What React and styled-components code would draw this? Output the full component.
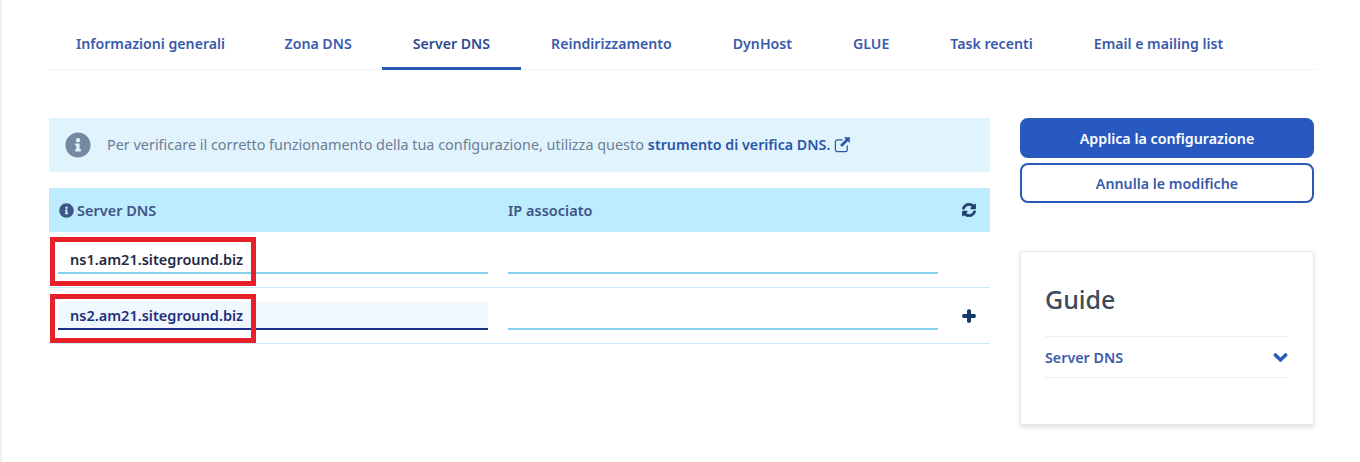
import React from 'react';
import styled, { createGlobalStyle } from 'styled-components';
import { FaInfoCircle, FaSyncAlt, FaPlus, FaChevronDown } from 'react-icons/fa';

/* STYLES */

const GlobalStyle = createGlobalStyle`
  html, body {
    margin: 0;
    padding: 0;
    background: #fff;
  }
  body {
    font-family: "Noto Sans", "Open Sans", sans-serif;
    font-size: 14px;
  }
`;

const Page = styled.div`
  width: 1360px;
  height: 462px;
  box-sizing: border-box;
  border-left: 2px solid #f1f1f1;
  padding: 0 44px 0 47px;
  overflow: hidden;
`;

const Tabs = styled.nav`
  display: flex;
  height: 70px;
  box-sizing: border-box;
  border-bottom: 1px solid #f0f2f4;
`;

const Tab = styled.a`
  display: block;
  box-sizing: border-box;
  height: 70px;
  padding: 34px 30.5px 0;
  line-height: 20px;
  font-size: 14.15px;
  font-weight: 600;
  white-space: nowrap;
  color: ${props => (props.$active ? '#2c4c8f' : '#3a5aab')};
  border-bottom: ${props => (props.$active ? '3px solid #2859b8' : 'none')};

  &:first-child {
    padding-left: 27px;
    padding-right: 29px;
  }
`;

const Content = styled.div`
  display: grid;
  grid-template-columns: 941px 294px;
  column-gap: 30px;
  padding-top: 48px;
`;

const Banner = styled.div`
  display: flex;
  align-items: center;
  height: 54px;
  padding-left: 16px;
  background: #e1f3fd;
  color: #6c7e94;
  font-size: 14.4px;
  white-space: nowrap;

  svg.info {
    width: 26px;
    height: 26px;
    color: #748aa3;
    margin-right: 16px;
    flex: none;
  }
`;

const BannerLink = styled.a`
  color: #2a56a8;
  font-size: 14.25px;
  font-weight: 600;
  margin-left: 4px;
`;

const LinkIcon = styled.svg`
  width: 17px;
  height: 17px;
  margin-left: 4px;
  margin-bottom: 2px;
  vertical-align: middle;
  color: #2a56a8;
`;

const Table = styled.div`
  margin-top: 16px;
`;

const Head = styled.div`
  display: grid;
  grid-template-columns: 459px 1fr 40px;
  align-items: center;
  height: 44px;
  background: #bdecfe;
  color: #3f5585;
  font-size: 14.5px;
  font-weight: 600;
`;

const HeadCell = styled.div`
  display: flex;
  align-items: center;
  gap: 3px;
  padding-left: ${props => props.$pad}px;

  svg {
    width: 15px;
    height: 15px;
  }
`;

const RefreshCell = styled.div`
  display: flex;
  justify-content: center;
  padding-right: 2px;
  color: #21406f;

  svg {
    width: 14px;
    height: 14px;
    stroke: currentColor;
    stroke-width: 25;
  }
`;

const Row = styled.div`
  position: relative;
  display: grid;
  grid-template-columns: 430px 430px 1fr;
  column-gap: 20px;
  height: 56px;
  box-sizing: border-box;
  padding-left: 9px;
  border-bottom: 1px solid #c6eef8;
`;

const Field = styled.div`
  align-self: end;
  box-sizing: border-box;
  height: 28px;
  margin-bottom: 13px;
  padding-left: 12px;
  line-height: 26px;
  font-size: 14.5px;
  font-weight: 600;
  white-space: nowrap;
  color: ${props => (props.$focused ? '#1f2f80' : '#1f2b46')};
  background: ${props => (props.$focused ? '#f0f8fe' : 'transparent')};
  border-bottom: 2px solid ${props => (props.$focused ? '#1c2f85' : '#86d0ee')};
`;

const RowAction = styled.div`
  display: flex;
  justify-content: flex-start;
  align-items: center;
  padding: 0 0 0 4px;
  color: #153a6e;

  svg {
    width: 14px;
    height: 14px;
    stroke: currentColor;
    stroke-width: 50;
  }
`;

// Red annotation drawn over the first column
const Highlight = styled.div`
  position: absolute;
  left: 1px;
  top: ${props => props.$top}px;
  width: 206px;
  height: 49px;
  box-sizing: border-box;
  border: 5px solid #e8202a;
`;

const Side = styled.aside`
  display: flex;
  flex-direction: column;
`;

const Button = styled.button`
  display: block;
  width: 100%;
  height: 40px;
  box-sizing: border-box;
  margin-bottom: 5px;
  border-radius: 8px;
  border: 2px solid #2859b8;
  font-family: inherit;
  font-size: 14.25px;
  font-weight: 600;
  background: ${props => (props.$primary ? '#2859c0' : '#fff')};
  color: ${props => (props.$primary ? '#fff' : '#3a5aab')};
`;

const GuideCard = styled.div`
  margin-top: 43px;
  height: 174px;
  box-sizing: border-box;
  padding: 27px 25px 0 24px;
  border: 1px solid #e6e8ea;
  border-radius: 2px;
  box-shadow: 0 2px 5px rgba(0, 0, 0, 0.14);
`;

const GuideTitle = styled.h2`
  margin: 0;
  height: 57px;
  line-height: 40px;
  font-size: 25px;
  font-weight: 500;
  color: #3c4a5c;
`;

const GuideItem = styled.div`
  display: flex;
  justify-content: space-between;
  align-items: center;
  height: 42px;
  box-sizing: border-box;
  border-top: 1px solid #eceef0;
  border-bottom: 1px solid #eceef0;
  font-size: 14.3px;
  font-weight: 600;
  color: #3a5aab;

  svg {
    width: 15px;
    height: 15px;
    color: #2859b8;
    stroke: currentColor;
    stroke-width: 40;
  }
`;

const tabs = [
    'Informazioni generali',
    'Zona DNS',
    'Server DNS',
    'Reindirizzamento',
    'DynHost',
    'GLUE',
    'Task recenti',
    'Email e mailing list',
];

function App() {
    return (
        <Page>
            <GlobalStyle/>
            <Tabs>
                {tabs.map(name => (
                    <Tab key={name} $active={name === 'Server DNS'}>{name}</Tab>
                ))}
            </Tabs>
            <Content>
                <div>
                    <Banner>
                        <FaInfoCircle className="info"/>
                        <span>
                            Per verificare il corretto funzionamento della tua configurazione, utilizza questo
                            <BannerLink>strumento di verifica DNS.</BannerLink>
                            <LinkIcon viewBox="0 0 18 18" fill="none" stroke="currentColor">
                                <path d="M14 10v4.5a2 2 0 0 1-2 2H3.5a2 2 0 0 1-2-2V6a2 2 0 0 1 2-2H9" strokeWidth="1.3"/>
                                <path d="M11 1.5h5.5V7L14.6 5.2 8.5 11.3 6.7 9.5l6.1-6.1z" fill="currentColor" strokeWidth="0.5"/>
                            </LinkIcon>
                        </span>
                    </Banner>
                    <Table>
                        <Head>
                            <HeadCell $pad={10}><FaInfoCircle/>Server DNS</HeadCell>
                            <HeadCell $pad={0}>IP associato</HeadCell>
                            <RefreshCell><FaSyncAlt/></RefreshCell>
                        </Head>
                        <Row>
                            <Field>ns1.am21.siteground.biz</Field>
                            <Field/>
                            <RowAction/>
                            <Highlight $top={5}/>
                        </Row>
                        <Row>
                            <Field $focused>ns2.am21.siteground.biz</Field>
                            <Field/>
                            <RowAction><FaPlus/></RowAction>
                            <Highlight $top={6}/>
                        </Row>
                    </Table>
                </div>
                <Side>
                    <Button $primary>Applica la configurazione</Button>
                    <Button>Annulla le modifiche</Button>
                    <GuideCard>
                        <GuideTitle>Guide</GuideTitle>
                        <GuideItem>Server DNS<FaChevronDown/></GuideItem>
                    </GuideCard>
                </Side>
            </Content>
        </Page>
    );
}

export default App;
